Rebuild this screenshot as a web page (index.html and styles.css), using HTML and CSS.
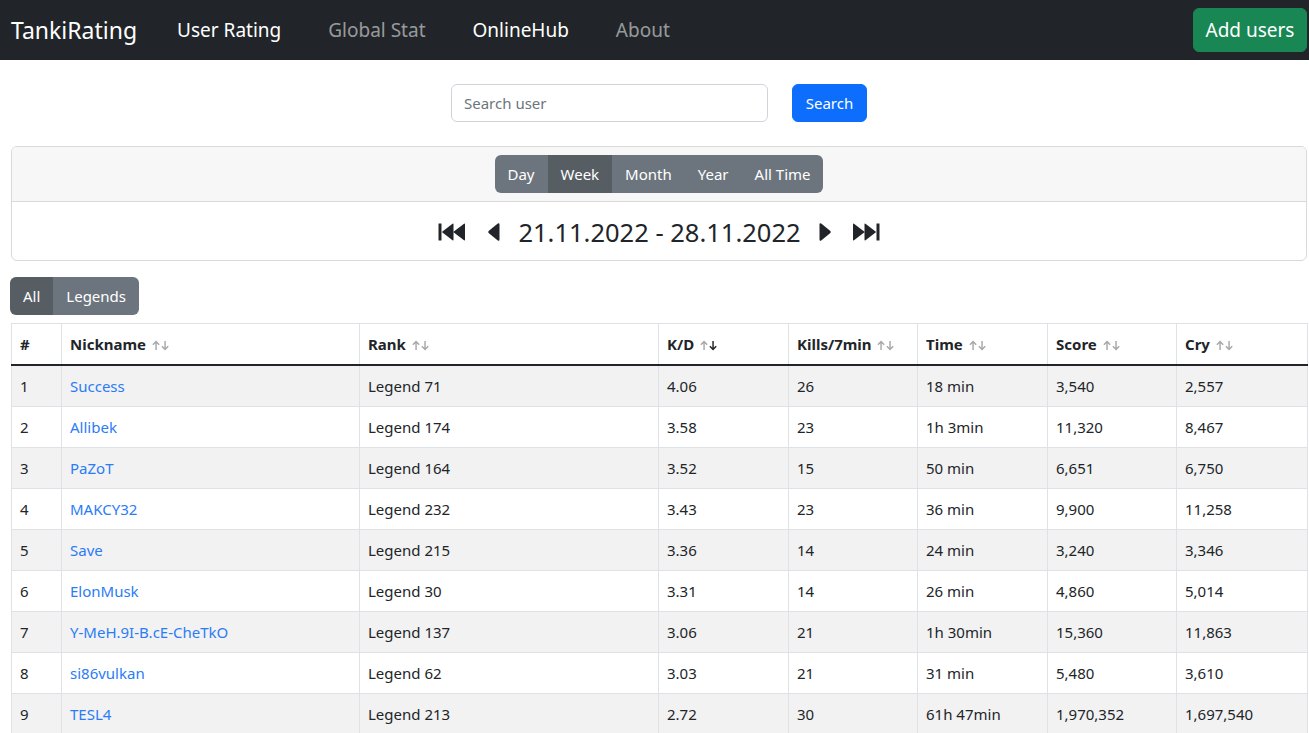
FILE: index.html
```html
<!DOCTYPE html>
<html lang="en">
<head>
<meta charset="utf-8">
<title>TankiRating</title>
<link rel="stylesheet" href="styles.css">
</head>
<body>
<nav class="navbar">
  <a class="brand" href="#">TankiRating</a>
  <ul class="nav">
    <li><a class="nav-link active" href="#">User Rating</a></li>
    <li><a class="nav-link" href="#">Global Stat</a></li>
    <li><a class="nav-link active" href="#">OnlineHub</a></li>
    <li><a class="nav-link" href="#">About</a></li>
  </ul>
  <button class="btn-add">Add users</button>
</nav>

<main class="content">
  <form class="search">
    <input class="search-input" type="text" placeholder="Search user">
    <button class="btn-search" type="button">Search</button>
  </form>

  <section class="card">
    <div class="card-header">
      <div class="btn-group">
        <button class="seg">Day</button>
        <button class="seg active">Week</button>
        <button class="seg">Month</button>
        <button class="seg">Year</button>
        <button class="seg">All Time</button>
      </div>
    </div>
    <div class="card-body">
      <svg class="ico-skip" viewBox="0 0 28 20"><path d="M0.5 1.5h3v17h-3z"/><path d="M3.8 10 L14.5 1.8 Q15.5 1.2 15.5 2.5 V17.5 Q15.5 18.8 14.5 18.2 Z"/><path d="M15.2 10 L26 1.8 Q27 1.2 27 2.5 V17.5 Q27 18.8 26 18.2 Z"/></svg>
      <svg class="ico-caret" viewBox="0 0 12 18"><path d="M0.6 9.9 Q0 9 0.6 8.1 L9.8 0.6 Q11.5 -0.4 11.5 1.6 V16.4 Q11.5 18.4 9.8 17.4 Z"/></svg>
      <span class="range">21.11.2022 - 28.11.2022</span>
      <svg class="ico-caret" viewBox="0 0 12 18"><path d="M11.4 9.9 Q12 9 11.4 8.1 L2.2 0.6 Q0.5 -0.4 0.5 1.6 V16.4 Q0.5 18.4 2.2 17.4 Z"/></svg>
      <svg class="ico-skip" viewBox="0 0 28 20"><path d="M24.5 1.5h3v17h-3z"/><path d="M24.2 10 L13.5 1.8 Q12.5 1.2 12.5 2.5 V17.5 Q12.5 18.8 13.5 18.2 Z"/><path d="M12.8 10 L2 1.8 Q1 1.2 1 2.5 V17.5 Q1 18.8 2 18.2 Z"/></svg>
    </div>
  </section>

  <div class="btn-group filter">
    <button class="seg active">All</button>
    <button class="seg">Legends</button>
  </div>

  <table class="rating">
    <colgroup>
      <col class="c-num"><col class="c-nick"><col class="c-rank"><col class="c-kd"><col class="c-kills"><col class="c-time"><col class="c-score"><col class="c-cry">
    </colgroup>
    <thead>
      <tr>
        <th>#</th>
        <th>Nickname <svg class="sort" viewBox="0 0 20 12"><path d="M4.5 11V2M1 5.2 4.5 1.5 8 5.2"/><path d="M14.5 1v9M11 6.8l3.5 3.7 3.5-3.7"/></svg></th>
        <th>Rank <svg class="sort" viewBox="0 0 20 12"><path d="M4.5 11V2M1 5.2 4.5 1.5 8 5.2"/><path d="M14.5 1v9M11 6.8l3.5 3.7 3.5-3.7"/></svg></th>
        <th>K/D <svg class="sort" viewBox="0 0 20 12"><path d="M4.5 11V2M1 5.2 4.5 1.5 8 5.2"/><path class="on" d="M14.5 1v9M11 6.8l3.5 3.7 3.5-3.7"/></svg></th>
        <th>Kills/7min <svg class="sort" viewBox="0 0 20 12"><path d="M4.5 11V2M1 5.2 4.5 1.5 8 5.2"/><path d="M14.5 1v9M11 6.8l3.5 3.7 3.5-3.7"/></svg></th>
        <th>Time <svg class="sort" viewBox="0 0 20 12"><path d="M4.5 11V2M1 5.2 4.5 1.5 8 5.2"/><path d="M14.5 1v9M11 6.8l3.5 3.7 3.5-3.7"/></svg></th>
        <th>Score <svg class="sort" viewBox="0 0 20 12"><path d="M4.5 11V2M1 5.2 4.5 1.5 8 5.2"/><path d="M14.5 1v9M11 6.8l3.5 3.7 3.5-3.7"/></svg></th>
        <th>Cry <svg class="sort" viewBox="0 0 20 12"><path d="M4.5 11V2M1 5.2 4.5 1.5 8 5.2"/><path d="M14.5 1v9M11 6.8l3.5 3.7 3.5-3.7"/></svg></th>
      </tr>
    </thead>
    <tbody>
      <tr><td>1</td><td><a href="#">Success</a></td><td>Legend 71</td><td>4.06</td><td>26</td><td>18 min</td><td>3,540</td><td>2,557</td></tr>
      <tr><td>2</td><td><a href="#">Allibek</a></td><td>Legend 174</td><td>3.58</td><td>23</td><td>1h 3min</td><td>11,320</td><td>8,467</td></tr>
      <tr><td>3</td><td><a href="#">PaZoT</a></td><td>Legend 164</td><td>3.52</td><td>15</td><td>50 min</td><td>6,651</td><td>6,750</td></tr>
      <tr><td>4</td><td><a href="#">MAKCY32</a></td><td>Legend 232</td><td>3.43</td><td>23</td><td>36 min</td><td>9,900</td><td>11,258</td></tr>
      <tr><td>5</td><td><a href="#">Save</a></td><td>Legend 215</td><td>3.36</td><td>14</td><td>24 min</td><td>3,240</td><td>3,346</td></tr>
      <tr><td>6</td><td><a href="#">ElonMusk</a></td><td>Legend 30</td><td>3.31</td><td>14</td><td>26 min</td><td>4,860</td><td>5,014</td></tr>
      <tr><td>7</td><td><a href="#">Y-MeH.9I-B.cE-CheTkO</a></td><td>Legend 137</td><td>3.06</td><td>21</td><td>1h 30min</td><td>15,360</td><td>11,863</td></tr>
      <tr><td>8</td><td><a href="#">si86vulkan</a></td><td>Legend 62</td><td>3.03</td><td>21</td><td>31 min</td><td>5,480</td><td>3,610</td></tr>
      <tr><td>9</td><td><a href="#">TESL4</a></td><td>Legend 213</td><td>2.72</td><td>30</td><td>61h 47min</td><td>1,970,352</td><td>1,697,540</td></tr>
    </tbody>
  </table>
</main>
</body>
</html>
```

FILE: styles.css
```css
* { box-sizing: border-box; }

body {
  margin: 0;
  font-family: "Noto Sans", "Open Sans", sans-serif;
  font-size: 15px;
  line-height: 24px;
  color: #212529;
  background: #fff;
}

a { color: #2a7cf6; text-decoration: none; }

.navbar {
  display: flex;
  align-items: center;
  height: 60px;
  padding: 0 2px 0 11px;
  background: #212529;
}

.brand {
  color: #fff;
  font-size: 23px;
  line-height: 30px;
  margin-right: 40px;
}

.nav {
  display: flex;
  gap: 47px;
  list-style: none;
  margin: 0;
  padding: 0;
  flex: 1;
}

.nav-link {
  font-size: 19px;
  line-height: 30px;
  color: rgba(255, 255, 255, 0.55);
}

.nav-link.active { color: #fff; }

.btn-add {
  font-family: inherit;
  font-size: 19px;
  line-height: 30px;
  height: 44px;
  width: 114px;
  padding: 0;
  color: #fff;
  background: #198754;
  border: 1px solid #198754;
  border-radius: 6px;
}

.content {
  padding: 24px 2px 0 11px;
}

.search {
  display: flex;
  justify-content: center;
  gap: 24px;
  margin: 0 0 24px;
}

.search-input {
  width: 317px;
  height: 38px;
  padding: 0 12px;
  font-family: inherit;
  font-size: 15px;
  color: #212529;
  border: 1px solid #ced4da;
  border-radius: 6px;
}

.search-input::placeholder { color: #6c757d; }

.btn-search {
  width: 75px;
  height: 38px;
  font-family: inherit;
  font-size: 15px;
  color: #fff;
  background: #0d6efd;
  border: 1px solid #0d6efd;
  border-radius: 6px;
}

.card {
  border: 1px solid #d9d9d9;
  border-radius: 6px;
  margin-bottom: 16px;
}

.card-header {
  display: flex;
  justify-content: center;
  padding: 8px 16px;
  background: #f7f7f7;
  border-bottom: 1px solid #d9d9d9;
  border-radius: 5px 5px 0 0;
}

.btn-group {
  display: inline-flex;
  border-radius: 6px;
  overflow: hidden;
}

.seg {
  height: 38px;
  padding: 0 13px;
  font-family: inherit;
  font-size: 15px;
  color: #fff;
  background: #6c757d;
  border: 0;
}

.seg.active { background: #565e64; }

.card-body {
  display: flex;
  justify-content: center;
  align-items: center;
  height: 58px;
  padding-top: 1px;
}

.range {
  font-size: 25.5px;
  line-height: 34px;
  margin: 0 18px;
}

.ico-skip {
  width: 28px;
  height: 20px;
  fill: #212529;
  margin: 0 22px 0 0;
}

.ico-skip:last-child { margin: 0 0 0 21px; }

.ico-caret {
  width: 12px;
  height: 18px;
  fill: #212529;
}

.filter {
  display: flex;
  width: max-content;
  margin: 0 0 8px -1px;
}

.rating {
  width: 1296px;
  border-collapse: collapse;
  table-layout: fixed;
}

.c-num { width: 50px; }
.c-nick { width: 298px; }
.c-rank { width: 299px; }
.c-kd { width: 130px; }
.c-kills { width: 129px; }
.c-time { width: 130px; }
.c-score { width: 129px; }
.c-cry { width: 131px; }

.rating th,
.rating td {
  text-align: left;
  padding: 8px;
  border: 1px solid #dee2e6;
  white-space: nowrap;
}

.rating th {
  font-weight: 700;
  height: 41px;
  padding: 8px 8px 7px;
  border-bottom: 2px solid #212529;
}

.rating td { height: 41px; }

.rating tbody tr:nth-child(odd) td { background: #f2f2f2; }

.sort {
  width: 18px;
  height: 11px;
  margin-left: 2px;
  vertical-align: -1px;
  fill: none;
  stroke: #a8a8a8;
  stroke-width: 1.6;
}

.sort .on { stroke: #212529; }
```
